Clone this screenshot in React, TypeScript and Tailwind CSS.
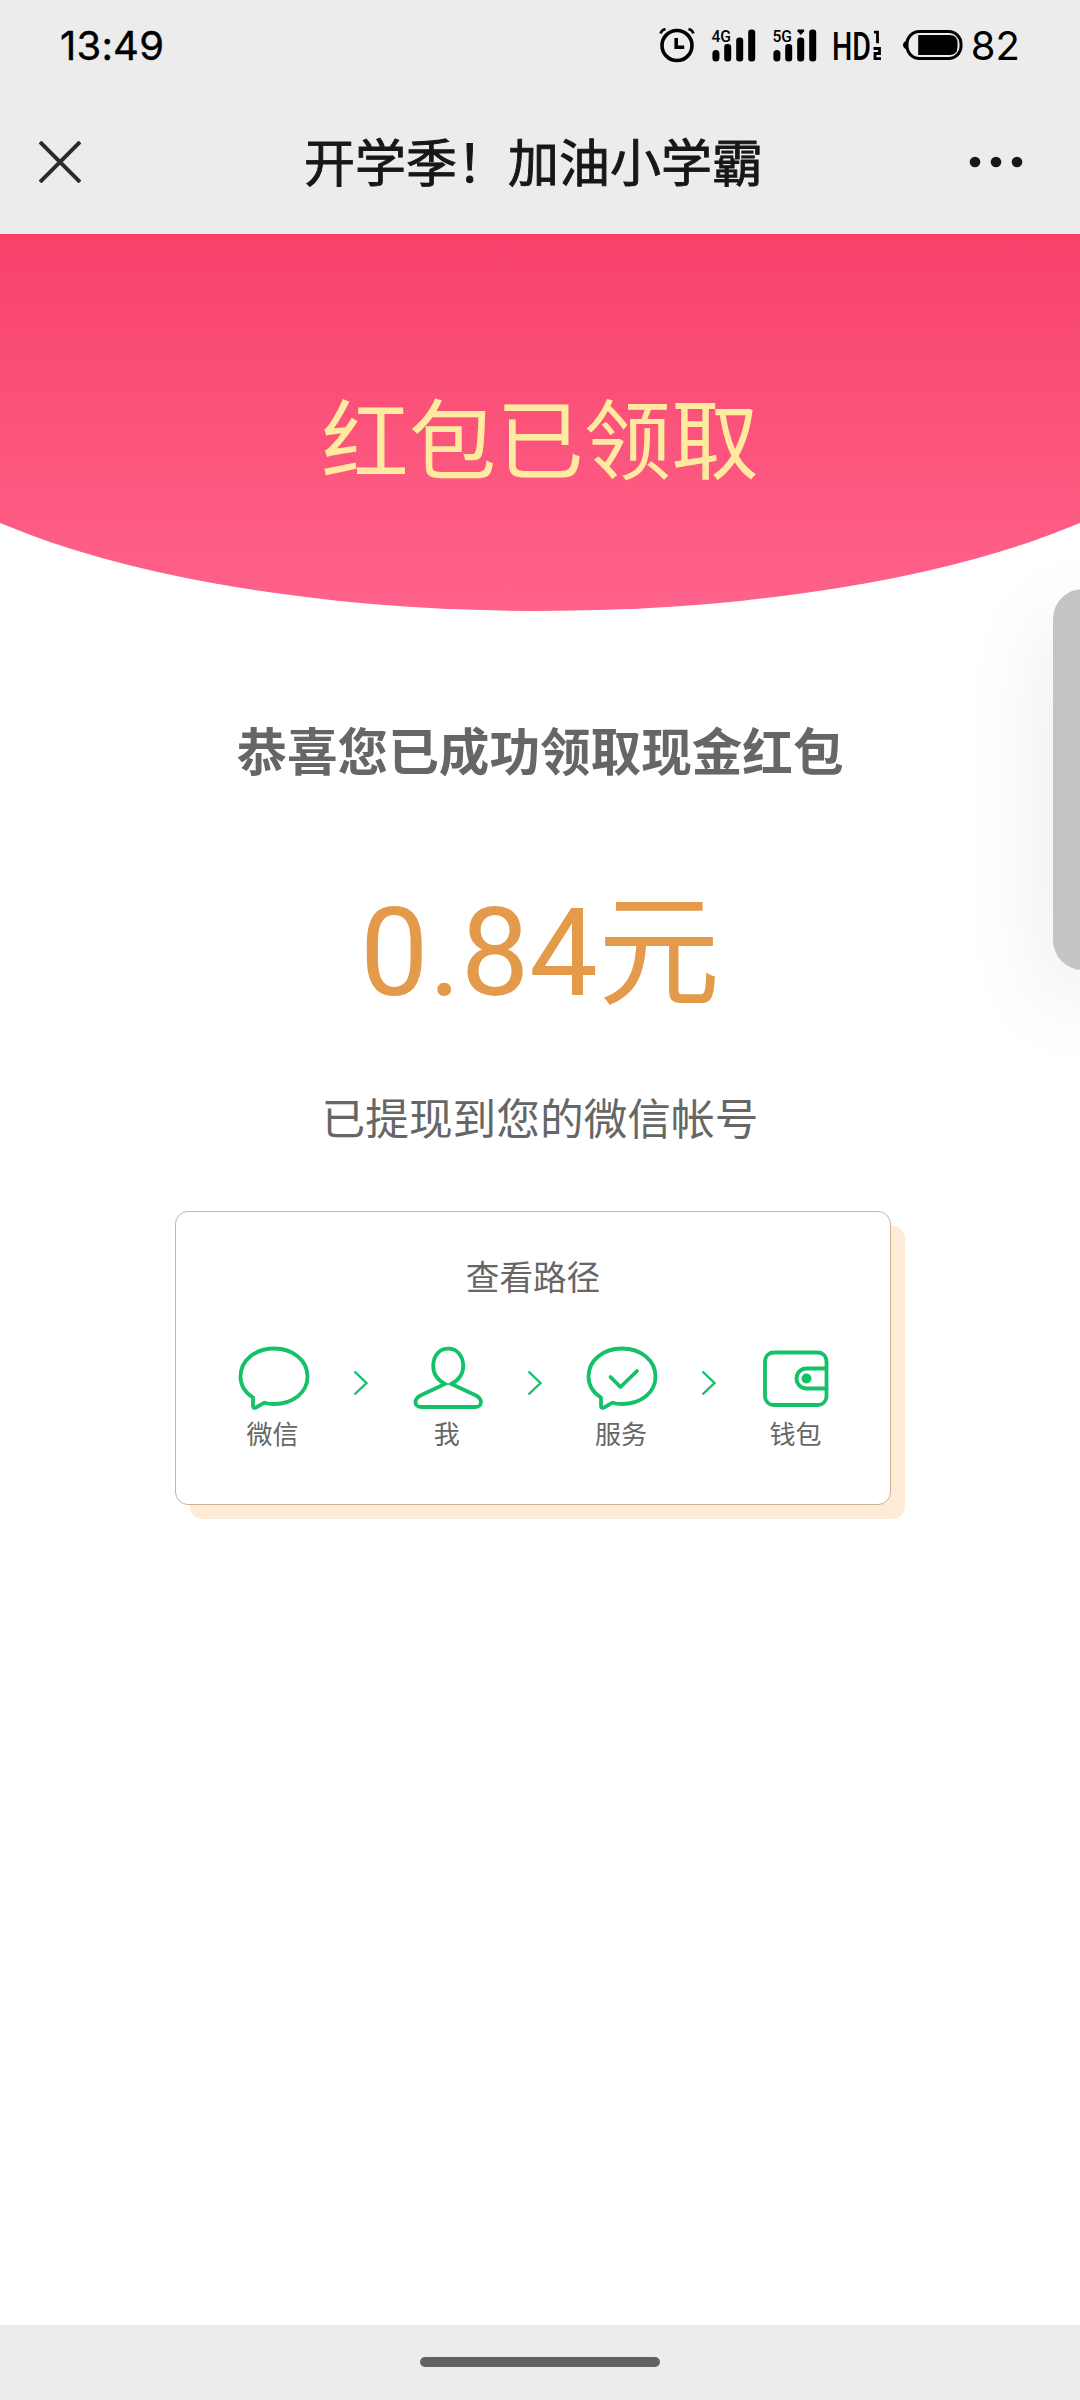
import { ReactNode } from "react";

const GREEN = "#12c168";

function SignalBars({ label, roaming }: { label: string; roaming?: boolean }) {
  return (
    <svg className="overflow-visible" width="44" height="34" viewBox="0 0 44 34" fill="#000">
      <text
        x="-0.5"
        y="12.5"
        fontFamily="Roboto, sans-serif"
        fontSize="17"
        fontWeight="500"
        textLength="19.5"
        lengthAdjust="spacingAndGlyphs"
      >
        {label}
      </text>
      <rect x="0.4" y="21" width="7" height="11.5" rx="3.5" />
      <rect x="12.2" y="15" width="7" height="17.5" rx="3" />
      <rect x="24.2" y="8.5" width="7" height="24" rx="3" />
      <rect x="36.2" y="0.5" width="7" height="32" rx="3" />
      {roaming ? <path d="M24.5 0.5h6.6v2l-3.3 3.5-3.3-3.500z" /> : null}
    </svg>
  );
}

function StatusBar() {
  return (
    <div className="flex h-[92px] items-center px-[60px] text-black">
      <div className="flex-1 text-[40px] leading-[48px] tracking-[0.2px] [-webkit-text-stroke:0.4px_#000]">
        13:49
      </div>
      <div className="flex items-center">
        <svg width="36" height="36" viewBox="0 0 36 36" fill="none" stroke="#000">
          <circle cx="18" cy="17.5" r="15" strokeWidth="3.6" />
          <path d="M17.2 10v9.2h8" strokeWidth="3.6" />
          <path d="M1.5 5.5Q2.5 2 6.5 1M34.5 5.5Q33.5 2 29.5 1" strokeWidth="2.6" />
        </svg>
        <div className="ml-[17px]">
          <SignalBars label="4G" />
        </div>
        <div className="ml-[17px]">
          <SignalBars label="5G" roaming />
        </div>
        <svg className="ml-[17px] overflow-visible" width="50" height="34" viewBox="0 0 50 34" fill="#000">
          <text
            x="-2"
            y="30.5"
            fontFamily="Roboto, sans-serif"
            fontSize="39"
            fontWeight="500"
            textLength="39"
            lengthAdjust="spacingAndGlyphs"
          >
            HD
          </text>
          <path d="M40 3.2h3.5v11" fill="none" stroke="#000" strokeWidth="2.8" />
          <path d="M39.5 19.5h6v5h-4.5v5.2h6" fill="none" stroke="#000" strokeWidth="2.8" />
        </svg>
        <svg className="ml-[19px]" width="62" height="34" viewBox="0 0 62 34">
          <path d="M4 11.5Q0 13 0 16t4 4.5z" fill="#000" />
          <rect x="4" y="2.5" width="54" height="27" rx="12.5" fill="none" stroke="#000" strokeWidth="3" />
          <path d="M15.200 6h31.300q8 0 8 8v4q0 8-8 8h-31.300z" fill="#000" />
        </svg>
        <div className="ml-[6px] text-[40px] leading-[48px]">82</div>
      </div>
    </div>
  );
}

function NavBar({ title }: { title: string }) {
  return (
    <div className="flex h-[142px] items-center px-[39px] pb-[2px]">
      <svg width="42" height="42" viewBox="0 0 42 42" stroke="#2b2b2b" strokeWidth="4">
        <path d="M1 1l40 40M41 1L1 41" />
      </svg>
      <div className="flex-1 pt-[3px] pl-[17px] text-center text-[51px] leading-[60px] text-[#171717] [-webkit-text-stroke:0.9px_#171717]">
        {title}
      </div>
      <svg width="72" height="12" viewBox="0 0 72 12" fill="#171717">
        <circle cx="6" cy="6" r="5.3" />
        <circle cx="27" cy="6" r="5.3" />
        <circle cx="48" cy="6" r="5.3" />
      </svg>
    </div>
  );
}

function ChatIcon({ checked }: { checked?: boolean }) {
  return (
    <svg
      width="72"
      height="64"
      viewBox="0 0 72 64"
      fill="none"
      stroke={GREEN}
      strokeWidth="3.8"
      strokeLinejoin="round"
      strokeLinecap="round"
    >
      <path d="M15 51.5C7 46.5 2.500 39 2.500 30.500C2.500 14.500 17 2.500 36 2.500S69.500 14.500 69.500 30.500S55 58 36 58Q30.500 58 26.500 56.700L18 61.500Q15 62.800 15 60Z" />
      {checked ? <path d="M24.500 31L34.500 41L51 25" /> : null}
    </svg>
  );
}

function PersonIcon() {
  return (
    <svg width="72" height="64" viewBox="0 0 72 64" fill="none" stroke={GREEN} strokeWidth="3.8">
      <path d="M33 38C25.500 34 21.200 28 21.200 20C21.200 9.500 27.500 2.700 36.200 2.700S51.200 9.500 51.200 20C51.200 28 47 34 39.400 38L63.500 49.300C71 53 70.500 61 63.500 61H8.900C1.900 61 1.400 53 8.900 49.300Z" />
    </svg>
  );
}

function WalletIcon() {
  return (
    <svg width="72" height="64" viewBox="0 0 72 64" fill="none" stroke={GREEN} strokeWidth="3.8">
      <rect x="5" y="6.5" width="61.5" height="52.5" rx="8.5" />
      <path d="M66.5 22.5H46.500A10 10 0 0 0 46.500 42.500H66.500" />
      <circle cx="46.5" cy="32.5" r="5" fill={GREEN} stroke="none" />
    </svg>
  );
}

function Step({ icon, label }: { icon: ReactNode; label: string }) {
  return (
    <div className="flex w-[72px] flex-col items-center">
      {icon}
      <span className="mt-[6px] pr-[2px] text-[26px] leading-[38px] whitespace-nowrap">{label}</span>
    </div>
  );
}

function Chevron() {
  return (
    <div className="flex w-[102.3px] justify-center pt-[24px]">
      <svg width="16" height="26" viewBox="0 0 16 26" fill="none" stroke={GREEN} strokeWidth="2.4">
        <path d="M1.5 1.5L13.5 13L1.5 24.5" />
      </svg>
    </div>
  );
}

function PathCard() {
  return (
    <div className="ml-[175px] h-[294px] w-[716px] rounded-[13px] border border-[#d0b292] bg-white pt-[45px] text-[#666] shadow-[14.5px_14.5px_0_-0.5px_#fdebd8]">
      <div className="text-center text-[33.6px] leading-[44px]">查看路径</div>
      <div className="mt-[45px] flex items-start pl-[61.5px]">
        <Step icon={<ChatIcon />} label="微信" />
        <Chevron />
        <Step icon={<PersonIcon />} label="我" />
        <Chevron />
        <Step icon={<ChatIcon checked />} label="服务" />
        <Chevron />
        <Step icon={<WalletIcon />} label="钱包" />
      </div>
    </div>
  );
}

export default function App() {
  return (
    <div className="relative flex h-[2400px] w-[1080px] flex-col overflow-hidden bg-white font-[Inter,'Noto_Sans_CJK_SC',sans-serif]">
      <header className="bg-[#ececec]">
        <StatusBar />
        <NavBar title="开学季！加油小学霸" />
      </header>

      <main className="flex-1 font-[Roboto,'Noto_Sans_CJK_SC',sans-serif]">
        <div className="h-[377px] bg-linear-to-b from-[#f7416a] to-[#ff628b] pt-[145px] text-center text-[87.5px] leading-[128px] text-[#ffeb9f] [clip-path:ellipse(692px_235px_at_540px_142px)]">
          红包已领取
        </div>
        <div className="mt-[106px] text-center text-[50.6px] leading-[74px] font-bold text-[#666]">
          恭喜您已成功领取现金红包
        </div>
        <div className="mt-[73px] text-center text-[122px] leading-[180px] text-[#e39a4b]">0.84元</div>
        <div className="mt-[44px] mb-[59px] text-center text-[43.7px] leading-[64px] text-[#666]">
          已提现到您的微信帐号
        </div>
        <PathCard />
      </main>

      <footer className="flex h-[75px] justify-center bg-[#ececec] pt-[32px]">
        <div className="h-[10px] w-[240px] rounded-full bg-[#616161]" />
      </footer>

      {/* edge handle floating over the page */}
      <div className="absolute top-[589px] -right-[33px] h-[381px] w-[60px] rounded-[30px] bg-[#c4c4c4] shadow-[0_30px_90px_rgba(0,0,0,0.1)]" />
    </div>
  );
}
